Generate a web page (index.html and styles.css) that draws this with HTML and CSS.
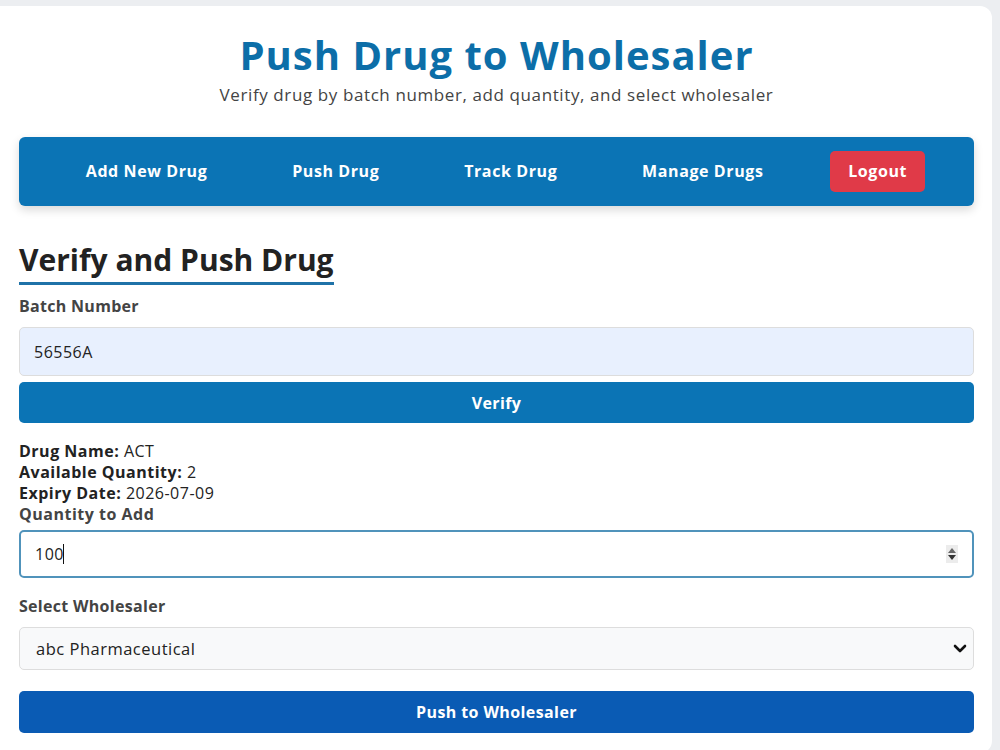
FILE: index.html
```html
<!DOCTYPE html>
<html lang="en">
<head>
    <meta charset="UTF-8">
    <meta name="viewport" content="width=device-width, initial-scale=1.0">
    <title>Push Drug to Wholesaler</title>
    <link rel="stylesheet" href="styles.css">
</head>
<body>
    <div class="container">
        <header class="page-header">
            <h1>Push Drug to Wholesaler</h1>
            <p>Verify drug by batch number, add quantity, and select wholesaler</p>
        </header>

        <nav class="navbar">
            <a href="#">Add New Drug</a>
            <a href="#">Push Drug</a>
            <a href="#">Track Drug</a>
            <a href="#">Manage Drugs</a>
            <a href="#" class="logout">Logout</a>
        </nav>

        <section class="push-form">
            <h2>Verify and Push Drug</h2>

            <label for="batchNumber" class="field-label">Batch Number</label>
            <input type="text" id="batchNumber" class="field autofilled" value="56556A">
            <button class="btn btn-verify">Verify</button>

            <div class="drug-info">
                <div><strong>Drug Name:</strong> ACT</div>
                <div><strong>Available Quantity:</strong> 2</div>
                <div><strong>Expiry Date:</strong> 2026-07-09</div>
                <label for="quantity" class="info-label">Quantity to Add</label>
            </div>
            <div class="number-wrap">
                <input type="text" id="quantity" class="field field-active" value="100">
                <span class="caret"></span>
                <!-- up/down arrows of the number field -->
                <svg class="spinner" width="12" height="18" viewBox="0 0 12 18">
                    <rect width="12" height="18" fill="#ececec"/>
                    <path d="M2 8 L6 3 L10 8 Z" fill="#666"/>
                    <path d="M2 10 L6 15 L10 10 Z" fill="#333"/>
                </svg>
            </div>

            <label for="wholesaler" class="field-label wholesaler-label">Select Wholesaler</label>
            <div class="select-wrap">
                <select id="wholesaler" class="field select">
                    <option>abc Pharmaceutical</option>
                </select>
                <svg class="chevron" width="14" height="10" viewBox="0 0 14 10">
                    <path d="M2 2 L7 7 L12 2" fill="none" stroke="#111" stroke-width="2.6" stroke-linecap="round" stroke-linejoin="round"/>
                </svg>
            </div>
            <button class="btn btn-push">Push to Wholesaler</button>
        </section>
    </div>
</body>
</html>
```

FILE: styles.css
```css
body {
    margin: 0;
    background-color: #eceef1;
    font-family: "Open Sans", "Noto Sans", Arial, sans-serif;
    color: #222;
}

.container {
    margin: 6px 8px 0 0;
    background: #fff;
    border-radius: 0 12px 12px 0;
    padding: 24px 18px 20px 19px;
    min-height: 720px;
    box-sizing: border-box;
}

/* heading */
.page-header {
    text-align: center;
}
.page-header h1 {
    margin: 0;
    font-size: 40px;
    line-height: 50px;
    font-weight: 700;
    color: #0c6ea8;
    letter-spacing: 1px;
}
.page-header p {
    margin: 4px 0 0;
    font-size: 17px;
    line-height: 22px;
    color: #444;
    letter-spacing: 0.6px;
}

/* top menu */
.navbar {
    margin-top: 31px;
    display: flex;
    justify-content: space-evenly;
    align-items: center;
    background-color: #0b74b5;
    border-radius: 6px;
    padding: 14px 0;
    box-shadow: 0 4px 10px rgba(0, 0, 0, 0.15);
}
.navbar a {
    color: #fff;
    text-decoration: none;
    font-weight: 700;
    font-size: 16px;
    line-height: 21px;
    letter-spacing: 0.6px;
    padding: 10px 18px;
}
.navbar a.logout {
    background-color: #e03a48;
    border-radius: 5px;
}

/* form */
.push-form h2 {
    display: inline-block;
    margin: 37px 0 0;
    font-size: 30px;
    line-height: 34px;
    font-weight: 700;
    color: #222;
    padding-bottom: 5px;
    border-bottom: 3px solid #1f72a8;
}
.field-label {
    display: block;
    margin-top: 11px;
    font-size: 16px;
    line-height: 20px;
    font-weight: 700;
    color: #444;
    letter-spacing: 0.3px;
}
.field {
    display: block;
    width: 100%;
    box-sizing: border-box;
    font-family: inherit;
    font-size: 16px;
    letter-spacing: 0.5px;
    color: #222;
    border: 1px solid #ddd;
    border-radius: 5px;
    outline: none;
}
.autofilled {
    margin-top: 11px;
    height: 49px;
    padding: 0 14px;
    background-color: #e8f0fe;
}
.btn {
    display: block;
    width: 100%;
    border: none;
    border-radius: 5px;
    color: #fff;
    font-family: inherit;
    font-weight: 700;
    font-size: 16px;
    letter-spacing: 0.4px;
    cursor: pointer;
}
.btn-verify {
    margin-top: 6px;
    height: 41px;
    background-color: #0b74b5;
}
.drug-info {
    margin-top: 18px;
    font-size: 16px;
    line-height: 21px;
    letter-spacing: 0.5px;
    color: #222;
}
.drug-info strong {
    font-weight: 700;
}
.info-label {
    display: block;
    font-weight: 700;
    color: #444;
}
.number-wrap {
    position: relative;
    margin-top: 5px;
}
.field-active {
    height: 48px;
    padding: 0 14px;
    border: 2px solid #5093bb;
    background: #fff;
}
.caret {
    position: absolute;
    left: 44px;
    top: 14px;
    width: 1px;
    height: 20px;
    background: #111;
}
.spinner {
    position: absolute;
    right: 16px;
    top: 15px;
}
.wholesaler-label {
    margin-top: 18px;
}
.select-wrap {
    position: relative;
    margin-top: 11px;
}
.select {
    appearance: none;
    -webkit-appearance: none;
    height: 43px;
    padding: 0 16px;
    font-size: 16.5px;
    background-color: #f8f9fa;
}
.chevron {
    position: absolute;
    right: 7px;
    top: 17px;
}
.btn-push {
    margin-top: 21px;
    height: 42px;
    background-color: #0a5bb4;
}
```
